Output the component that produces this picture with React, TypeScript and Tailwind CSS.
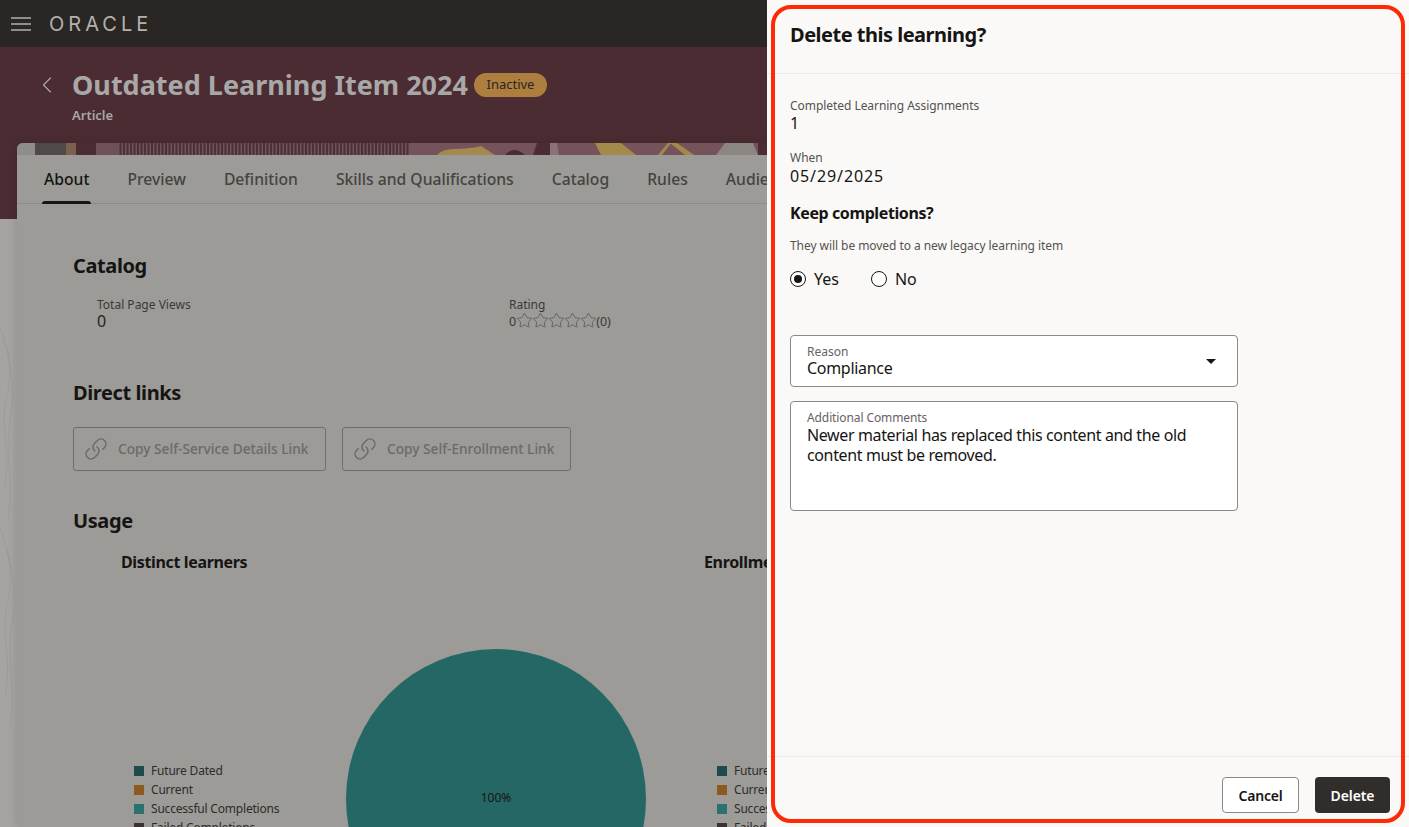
import { ChevronLeft, Link, Star } from 'lucide-react';

const font = "font-['Noto_Sans','Liberation_Sans',sans-serif]";

const tabs = ['Preview', 'Definition', 'Skills and Qualifications', 'Catalog', 'Rules', 'Audience'];

const legend = [
  { label: 'Future Dated', color: 'bg-[#1f4a4c]' },
  { label: 'Current', color: 'bg-[#8a5a1e]' },
  { label: 'Successful Completions', color: 'bg-[#2b716e]' },
  { label: 'Failed Completions', color: 'bg-[#3b3233]' },
];

// decorative strip above the card, coordinates are px from the card's left edge
function Banner() {
  return (
    <svg viewBox="0 0 900 12" preserveAspectRatio="none" className="block h-[12px] w-full rounded-t-[6px] bg-[#74535a]">
      <rect x="0" width="18" height="12" fill="#8f8d8b" />
      <rect x="18" width="31" height="12" fill="#4f4a48" />
      <rect x="49" width="10" height="12" fill="#7a6050" />
      <rect x="59" width="20" height="12" fill="#4c2c33" />
      <rect x="79" width="22" height="12" fill="#6f5057" />
      <rect x="101" width="291" height="12" fill="#4f3038" />
      <line x1="101" x2="392" y1="6" y2="6" stroke="#6d535a" strokeWidth="12" strokeDasharray="1.5 2" />
      <path d="M420 12 Q426 5 440 6 Q458 5 464 3 L478 12 Z" fill="#a38a4c" />
      <path d="M488 12 Q497 2 508 12 Z" fill="#4c2c33" />
      <path d="M520 0 L533 0 L533 12 L516 12 Z" fill="#4c2c33" />
      <path d="M533 0 L540 0 L542 12 L533 12 Z" fill="#8a7278" />
      <path d="M578 0 L604 0 L619 12 L584 12 Z" fill="#a38a4c" />
      <path d="M641 12 L651 0 L654 0 L645 12 Z" fill="#a38a4c" />
      <path d="M653 0 L660 0 L677 12 L668 12 Z" fill="#a38a4c" />
      <path d="M699 12 L708 0 L736 0 L741 12 Z" fill="#8c8683" />
      <rect x="741" width="159" height="12" fill="#4c2c33" />
    </svg>
  );
}

function Contours() {
  return (
    <svg viewBox="0 0 17 608" preserveAspectRatio="none" className="block h-full w-full" fill="none" stroke="#999895" strokeWidth="0.7">
      <path d="M0 110 C8 125 14 150 6 180 C0 210 12 240 4 270" />
      <path d="M3 120 C12 150 16 175 10 200 C4 235 14 260 8 300" />
      <path d="M0 310 C10 330 14 360 6 390 C2 420 12 440 5 480" />
      <path d="M6 330 C15 360 17 390 11 410 C7 440 16 470 10 510" />
    </svg>
  );
}

function UsageColumn({ title, withPie }: { title: string; withPie?: boolean }) {
  return (
    <div className="w-[583px] shrink-0">
      <h3 className="text-[16px] leading-[22px] font-bold tracking-[-0.35px] text-[#161513]">{title}</h3>
      <div className="mt-[76px] flex items-start pl-[13px]">
        <ul className="mt-[114px] flex w-[212px] shrink-0 flex-col gap-[3px]">
          {legend.map((item) => (
            <li key={item.label} className="flex h-[16px] items-center gap-[7px] text-[12px] tracking-[-0.2px] whitespace-nowrap text-[#2e2b29]">
              <span className={`h-[10px] w-[10px] ${item.color}`} />
              {item.label}
            </li>
          ))}
        </ul>
        {withPie && (
          <div className="flex h-[300px] w-[300px] shrink-0 items-center justify-center rounded-full bg-[#256765] pb-[2px] text-[12px] text-[#161513]">
            100%
          </div>
        )}
      </div>
    </div>
  );
}

function CopyButton({ label, width }: { label: string; width: string }) {
  return (
    <button className={`flex h-[44px] items-center gap-[10px] rounded-[3px] border border-[#6f6e6b] pl-[10px] text-[13.7px] font-medium text-[#6b6a68] ${width}`}>
      <Link className="h-[24px] w-[24px] -scale-x-100 rotate-90" strokeWidth={1.5} />
      {label}
    </button>
  );
}

function Background() {
  return (
    <div className="h-full w-[767px] shrink-0 overflow-hidden bg-[#a5a4a1]">
      <header className="flex h-[47px] items-center gap-[18px] bg-[#2a2623] pl-[11px]">
        <svg width="20" height="14" viewBox="0 0 20 14" stroke="#b3b1ae" strokeWidth="1.6">
          <path d="M0 1H20M0 7H20M0 13H20" />
        </svg>
        <span className="font-['Inter',sans-serif] text-[20px] leading-none font-normal tracking-[4px] text-[#b3b1ae]">ORACLE</span>
      </header>

      <div className="h-[172px] bg-[#4c2c33]">
        <div className="flex items-center pt-[21px] pl-[33px]">
          <ChevronLeft className="h-[28px] w-[28px] text-[#a9a8a8]" strokeWidth={1} />
          <h1 className="ml-[11px] text-[27px] leading-[34px] font-bold text-[#a9a8a8]">Outdated Learning Item 2024</h1>
          <span className="ml-[6px] flex h-[24px] items-center rounded-full bg-[#ae7e3e] px-[12.5px] text-[13px] text-[#2a2623]">Inactive</span>
        </div>
        <p className="mt-[4px] pl-[72px] text-[13px] leading-[18px] font-semibold text-[#a9a8a6]">Article</p>
      </div>

      <div className="-mt-[76px] flex h-[684px] items-stretch">
        <div className="mt-[76px] w-[17px] shrink-0">
          <Contours />
        </div>
        <main className="w-[900px] shrink-0 rounded-t-[6px] bg-[#9c9b98] shadow-[0_0_10px_rgba(0,0,0,0.15)]">
          <Banner />
          <nav className="flex h-[49px] items-stretch gap-[38px] border-b border-[#8b8a87] pt-[1px] pl-[27px] text-[15.7px] font-medium text-[#454341]">
            <span className="relative flex items-center text-[#161513]">
              About
              <span className="absolute -inset-x-[2px] bottom-[-1px] h-[3px] rounded-t-[3px] bg-[#161513]" />
            </span>
            {tabs.map((tab) => (
              <span key={tab} className="flex items-center whitespace-nowrap">{tab}</span>
            ))}
          </nav>

          <div className="pt-[48px] pl-[56px]">
            <h2 className="text-[20px] leading-[28px] font-bold tracking-[-0.4px] text-[#161513]">Catalog</h2>
            <div className="mt-[18px] flex pl-[24px]">
              <div className="w-[412px]">
                <p className="text-[12px] leading-[13px] text-[#3b3937]">Total Page Views</p>
                <p className="text-[16px] leading-[20px] text-[#262422]">0</p>
              </div>
              <div>
                <p className="text-[12px] leading-[13px] text-[#3b3937]">Rating</p>
                <div className="flex h-[20px] translate-y-[1px] items-center text-[12.5px] text-[#3b3937]">
                  0
                  {[0, 1, 2, 3, 4].map((n) => (
                    <Star key={n} className="-mx-[0.5px] h-[17px] w-[17px] -translate-y-[2px] text-[#4f4e4c]" strokeWidth={1} />
                  ))}
                  (0)
                </div>
              </div>
            </div>

            <h2 className="mt-[48px] text-[20px] leading-[28px] font-bold tracking-[-0.4px] text-[#161513]">Direct links</h2>
            <div className="mt-[20px] flex gap-[16px]">
              <CopyButton label="Copy Self-Service Details Link" width="w-[253px]" />
              <CopyButton label="Copy Self-Enrollment Link" width="w-[229px]" />
            </div>

            <h2 className="mt-[36px] text-[20px] leading-[28px] font-bold tracking-[-0.4px] text-[#161513]">Usage</h2>
            <div className="mt-[16px] flex pl-[48px]">
              <UsageColumn title="Distinct learners" withPie />
              <UsageColumn title="Enrollments" />
            </div>
          </div>
        </main>
      </div>
    </div>
  );
}

function Radio({ label, checked }: { label: string; checked?: boolean }) {
  return (
    <label className="flex items-center gap-[8px] text-[16px] text-[#161513]">
      <span className="flex h-[16px] w-[16px] items-center justify-center rounded-full border border-[#161513] bg-white">
        {checked && <span className="h-[8px] w-[8px] rounded-full bg-[#161513]" />}
      </span>
      {label}
    </label>
  );
}

function DeletePanel() {
  return (
    <aside className="flex h-full flex-1 flex-col bg-[#faf9f7]">
      <div className="h-[74px] border-b border-[#ecebe9] pt-[20px] pl-[23px]">
        <h2 className="text-[20px] leading-[30px] font-bold tracking-[-0.5px] text-[#161513]">Delete this learning?</h2>
      </div>

      <div className="flex-1 pt-[24px] pl-[23px]">
        <p className="text-[12px] leading-[16px] tracking-[-0.05px] text-[#55524f]">Completed Learning Assignments</p>
        <p className="-mt-[1px] text-[16px] leading-[20px] text-[#161513]">1</p>
        <p className="mt-[17px] text-[12px] leading-[16px] text-[#55524f]">When</p>
        <p className="text-[16px] leading-[20px] tracking-[0.9px] text-[#161513]">05/29/2025</p>
        <h3 className="mt-[16px] text-[16px] leading-[22px] font-bold tracking-[-0.4px] text-[#161513]">Keep completions?</h3>
        <p className="mt-[14px] text-[12px] leading-[16px] tracking-[-0.06px] text-[#55524f]">They will be moved to a new legacy learning item</p>
        <div className="mt-[13px] flex h-[24px] items-center gap-[32px]">
          <Radio label="Yes" checked />
          <Radio label="No" />
        </div>

        <div className="mt-[44px] flex h-[52px] w-[448px] items-center justify-between rounded-[4px] border border-[#8b8886] bg-white pr-[21px] pl-[16px]">
          <div>
            <p className="text-[12px] leading-[15px] text-[#65625f]">Reason</p>
            <p className="text-[16px] leading-[19px] tracking-[-0.3px] text-[#161513]">Compliance</p>
          </div>
          <span className="h-0 w-0 border-x-[5px] border-t-[5px] border-x-transparent border-t-[#161513]" />
        </div>

        <div className="mt-[14px] h-[110px] w-[448px] rounded-[4px] border border-[#8b8886] bg-white px-[16px] pt-[9px]">
          <p className="text-[12px] leading-[14px] tracking-[-0.1px] text-[#65625f]">Additional Comments</p>
          <p className="w-[400px] text-[16px] leading-[20px] tracking-[-0.37px] text-[#161513]">Newer material has replaced this content and the old content must be removed.</p>
        </div>
      </div>

      <div className="flex h-[71px] justify-end gap-[16px] border-t border-[#ecebe9] pt-[20px] pr-[19px]">
        <button className="h-[36px] w-[77px] rounded-[4px] border border-[#8b8886] bg-white text-[14px] font-semibold tracking-[-0.2px] text-[#161513]">Cancel</button>
        <button className="h-[36px] w-[75px] rounded-[4px] bg-[#312d2a] text-[14px] font-semibold tracking-[-0.1px] text-white">Delete</button>
      </div>
    </aside>
  );
}

export default function App() {
  return (
    <div className={`relative flex h-[827px] w-[1409px] overflow-hidden ${font}`}>
      <Background />
      <DeletePanel />
      <div className="pointer-events-none absolute top-[5px] left-[771px] h-[818px] w-[634px] rounded-[20px] border-[4px] border-[#fc2a05]" />
    </div>
  );
}
